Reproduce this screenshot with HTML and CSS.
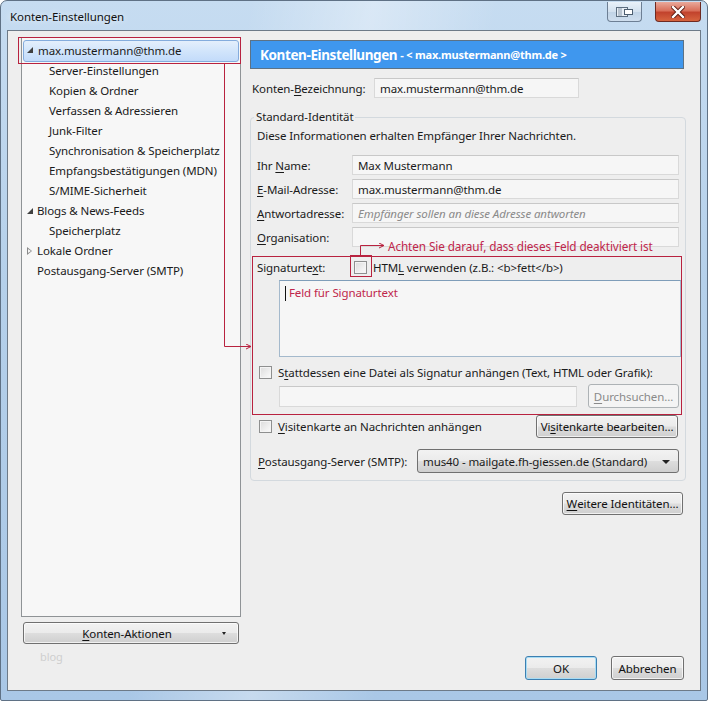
FILE: index.html
```html
<!DOCTYPE html>
<html lang="de">
<head>
<meta charset="utf-8">
<title>Konten-Einstellungen</title>
<link rel="stylesheet" href="styles.css">
</head>
<body>
<div class="window">
  <div class="titlebar">
    <span class="title">Konten-Einstellungen</span>
    <div class="caption-buttons">
      <span class="cap-btn cap-restore">
        <svg width="18" height="10" viewBox="0 0 18 10"><rect x="0.5" y="0.5" width="11" height="9" fill="#e8eef5" stroke="#5d6e80"/><rect x="8.5" y="2.5" width="8" height="5" fill="#fff" stroke="#4d5e70"/><line x1="3" y1="1" x2="3" y2="9" stroke="#8a9aab"/><line x1="5" y1="1" x2="5" y2="9" stroke="#8a9aab"/></svg>
      </span>
      <span class="cap-btn cap-close">
        <svg width="14" height="12" viewBox="0 0 14 12"><path d="M2 1 L12 11 M12 1 L2 11" stroke="#5a1a10" stroke-width="4.2" stroke-linecap="square"/><path d="M2 1 L12 11 M12 1 L2 11" stroke="#ffffff" stroke-width="2.4" stroke-linecap="square"/></svg>
      </span>
    </div>
  </div>
  <div class="client">
    <div class="left-col">
      <div class="tree">
        <div class="tree-row selected"><span class="twisty open"></span>max.mustermann@thm.de</div>
        <div class="tree-row child">Server-Einstellungen</div>
        <div class="tree-row child">Kopien &amp; Ordner</div>
        <div class="tree-row child">Verfassen &amp; Adressieren</div>
        <div class="tree-row child">Junk-Filter</div>
        <div class="tree-row child">Synchronisation &amp; Speicherplatz</div>
        <div class="tree-row child">Empfangsbestätigungen (MDN)</div>
        <div class="tree-row child">S/MIME-Sicherheit</div>
        <div class="tree-row"><span class="twisty open"></span>Blogs &amp; News-Feeds</div>
        <div class="tree-row child">Speicherplatz</div>
        <div class="tree-row"><span class="twisty closed"></span>Lokale Ordner</div>
        <div class="tree-row"><span class="twisty none"></span>Postausgang-Server (SMTP)</div>
      </div>
      <div class="btn actions-btn"><span class="btn-label"><u>K</u>onten-Aktionen</span><span class="mini-arrow"></span></div>
      <div class="faint">blog</div>
    </div>
    <div class="right-col">
      <div class="pane-header"><span class="ph-main">Konten-Einstellungen</span><span class="ph-sub"> - &lt; max.mustermann@thm.de &gt;</span></div>
      <div class="acct-row">
        <span class="acct-label">Konten-<u>B</u>ezeichnung:</span>
        <span class="field acct-field">max.mustermann@thm.de</span>
      </div>
      <fieldset class="group">
        <legend>Standard-Identität</legend>
        <div class="desc">Diese Informationen erhalten Empfänger Ihrer Nachrichten.</div>
        <div class="form-row first">
          <span class="flabel">Ihr <u>N</u>ame:</span>
          <span class="field wide">Max Mustermann</span>
        </div>
        <div class="form-row">
          <span class="flabel"><u>E</u>-Mail-Adresse:</span>
          <span class="field wide">max.mustermann@thm.de</span>
        </div>
        <div class="form-row">
          <span class="flabel"><u>A</u>ntwortadresse:</span>
          <span class="field wide placeholder">Empfänger sollen an diese Adresse antworten</span>
        </div>
        <div class="form-row">
          <span class="flabel"><u>O</u>rganisation:</span>
          <span class="field wide"></span>
        </div>
        <div class="sig-row">
          <span class="flabel">Signaturte<u>x</u>t:</span>
          <span class="check"></span>
          <span class="check-text">HTM<u>L</u> verwenden (z.B.: &lt;b&gt;fett&lt;/b&gt;)</span>
        </div>
        <div class="sig-area"><span class="caret"></span><span class="sig-note">Feld für Signaturtext</span></div>
        <div class="file-check-row">
          <span class="check"></span>
          <span class="check-text">S<u>t</u>attdessen eine Datei als Signatur anhängen (Text, HTML oder Grafik):</span>
        </div>
        <div class="file-row">
          <span class="field file-field"></span>
          <span class="btn disabled browse-btn"><u>D</u>urchsuchen...</span>
        </div>
        <div class="vcard-row">
          <span class="check"></span>
          <span class="check-text vcard-text"><u>V</u>isitenkarte an Nachrichten anhängen</span>
          <span class="btn vcard-btn">Vi<u>s</u>itenkarte bearbeiten...</span>
        </div>
        <div class="smtp-row">
          <span class="smtp-label"><u>P</u>ostausgang-Server (SMTP):</span>
          <span class="select">mus40 - mailgate.fh-giessen.de (Standard)<span class="sel-arrow"></span></span>
        </div>
      </fieldset>
      <div class="more-row">
        <span class="btn more-btn"><u>W</u>eitere Identitäten...</span>
      </div>
      <div class="dialog-buttons">
        <span class="btn default ok-btn">OK</span>
        <span class="btn cancel-btn">Abbrechen</span>
      </div>
    </div>
  </div>

  <svg class="annot" width="708" height="701" viewBox="0 0 708 701">
    <defs>
      <marker id="ah" markerWidth="6" markerHeight="6" refX="5" refY="3" orient="auto" markerUnits="userSpaceOnUse">
        <path d="M0 0.5 L5 3 L0 5.5" fill="none" stroke="#b8223f" stroke-width="1"/>
      </marker>
    </defs>
    <rect x="18.5" y="37.5" width="222" height="26" fill="none" stroke="#b8223f"/>
    <polyline points="224.5,63.5 224.5,346.5 251,346.5" fill="none" stroke="#b8223f" marker-end="url(#ah)"/>
    <rect x="252.5" y="256.5" width="429" height="158" fill="none" stroke="#b8223f"/>
    <rect x="350.5" y="255.5" width="21" height="21" fill="none" stroke="#b8223f"/>
    <polyline points="360.5,255.5 360.5,245.5 384,245.5" fill="none" stroke="#b8223f" marker-end="url(#ah)"/>
  </svg>
  <span class="annot-text">Achten Sie darauf, dass dieses Feld deaktiviert ist</span>
</div>
</body>
</html>
```

FILE: styles.css
```css
* { box-sizing: border-box; }
html, body { margin: 0; padding: 0; }
body {
  width: 708px;
  height: 701px;
  overflow: hidden;
  font-family: "Noto Sans", "Open Sans", sans-serif;
  font-size: 11.5px;
  letter-spacing: -0.1px;
  color: #1a1a1a;
  background: #ffffff;
}
u { text-decoration: underline; text-underline-offset: 2px; }

.window {
  position: relative;
  width: 708px;
  height: 701px;
  border: 1px solid #5f7185;
  border-radius: 7px 7px 2px 2px;
  background:
    linear-gradient(100deg, rgba(255,255,255,0) 30%, rgba(255,255,255,0.35) 45%, rgba(255,255,255,0) 60%),
    linear-gradient(180deg, #c6dcf1 0%, #b5d0ea 40%, #a9c7e6 100%);
  display: flex;
  flex-direction: column;
}

.titlebar {
  height: 29px;
  display: flex;
  align-items: flex-start;
  padding-left: 9px;
  flex: none;
}
.title {
  margin-top: 8px;
  font-size: 11.5px;
  color: #111;
  text-shadow: 0 0 6px rgba(255,255,255,0.9);
}
.caption-buttons {
  margin-left: auto;
  display: flex;
  gap: 13px;
  margin-right: 6px;
  margin-top: 1px;
}
.cap-btn {
  display: flex;
  align-items: center;
  justify-content: center;
  height: 20px;
  border: 1px solid #6d7f94;
  border-top: none;
  border-radius: 0 0 4px 4px;
}
.cap-restore {
  width: 35px;
  background: linear-gradient(180deg, #e9f1f9 0%, #d3e1ef 50%, #c0d3e6 51%, #cfdeee 100%);
}
.cap-close {
  width: 46px;
  border-color: #6e2a22;
  background: linear-gradient(180deg, #e9a99b 0%, #d9705b 45%, #c2432d 55%, #d6643f 100%);
}

.client {
  flex: 1;
  margin: 0 6px 9px 6px;
  border: 1px solid #6d7a88;
  background: #eeeeee;
  display: flex;
  padding: 6px 14px 10px 13px;
  gap: 9px;
}

.left-col {
  width: 220px;
  display: flex;
  flex-direction: column;
}
.tree {
  height: 580px;
  border: 1px solid #8f9396;
  background: #f7f7f7;
  padding: 2px 1px;
}
.tree-row {
  height: 20px;
  line-height: 20px;
  padding-left: 14px;
  white-space: nowrap;
  position: relative;
}
.tree-row.child { padding-left: 26px; }
.tree-row.selected {
  height: 22px;
  line-height: 20px;
  margin-bottom: -1px;
  padding-left: 14px;
  border: 1px solid #84acdd;
  border-radius: 3px;
  background: linear-gradient(180deg, #e4effc 0%, #d2e5fb 50%, #c3dbfa 100%);
}
.twisty {
  position: absolute;
  left: 4px;
  top: 7px;
  width: 0;
  height: 0;
}
.tree-row.selected .twisty { left: 3px; top: 6px; }
.twisty.open {
  border-right: 6px solid #404040;
  border-top: 6px solid transparent;
}
.twisty.closed {
  width: 4px;
  height: 8px;
  top: 6px;
  border: none;
  background: none;
}
.twisty.closed::before {
  content: "";
  position: absolute;
  left: 0;
  top: 0;
  border-left: 5px solid #8a8a8a;
  border-top: 4px solid transparent;
  border-bottom: 4px solid transparent;
}
.twisty.closed::after {
  content: "";
  position: absolute;
  left: 1px;
  top: 2px;
  border-left: 3px solid #f7f7f7;
  border-top: 2px solid transparent;
  border-bottom: 2px solid transparent;
}
.tree-row .twisty.none { display: none; }

.btn {
  display: inline-flex;
  align-items: center;
  justify-content: center;
  height: 23px;
  padding: 0 6px;
  border: 1px solid #707070;
  border-radius: 3px;
  background: linear-gradient(180deg, #f2f2f2 0%, #ebebeb 48%, #dddddd 52%, #cfcfcf 100%);
  box-shadow: inset 0 0 0 1px rgba(255,255,255,0.7);
  color: #111;
  white-space: nowrap;
}
.btn.disabled {
  border-color: #adb2b5;
  background: #f4f4f4;
  color: #8a8a8a;
  box-shadow: none;
}
.btn.default {
  border-color: #3c7fb1;
  box-shadow: inset 0 0 0 1px #a8dcf4;
}

.actions-btn {
  margin-top: 5px;
  margin-left: 2px;
  width: 216px;
  height: 22px;
  position: relative;
  padding-right: 14px;
}
.mini-arrow {
  position: absolute;
  right: 12px;
  top: 9px;
  border-top: 3px solid #222;
  border-left: 2px solid transparent;
  border-right: 2px solid transparent;
}
.faint {
  margin-top: 5px;
  margin-left: 19px;
  color: #cfcfcf;
  font-size: 11px;
}

.right-col {
  width: 436px;
  display: flex;
  flex-direction: column;
}
.pane-header {
  margin-top: 3px;
  width: 434px;
  height: 29px;
  border: 1px solid #5c7286;
  background: #3f97ee;
  color: #ffffff;
  font-weight: bold;
  display: flex;
  align-items: center;
  padding-left: 9px;
  white-space: nowrap;
}
.ph-main { font-size: 13.5px; letter-spacing: -0.4px; }
.ph-sub { font-size: 11px; margin-left: 3px; letter-spacing: -0.2px; }

.acct-row {
  margin-top: 9px;
  height: 20px;
  display: flex;
  align-items: center;
  padding-left: 2px;
}
.acct-label { width: 122px; }
.field {
  display: flex;
  align-items: center;
  height: 20px;
  border: 1px solid #d9d9d9;
  border-top-color: #c8c8c8;
  background: #f6f6f6;
  padding-left: 5px;
  white-space: nowrap;
  overflow: hidden;
}
.acct-field { width: 205px; }

.group {
  margin: 11px 0 0 0;
  padding: 0 6px 7px 6px;
  border: 1px solid #d3d9de;
  border-radius: 4px;
  min-width: 0;
}
.group legend {
  padding: 0 2px;
  margin-left: -3px;
  line-height: 16px;
}
.desc {
  height: 16px;
  line-height: 16px;
  margin-top: 3px;
}
.form-row {
  display: flex;
  align-items: center;
  height: 20px;
  margin-top: 4px;
}
.form-row.first { margin-top: 11px; }
.flabel { width: 95px; flex: none; white-space: nowrap; }
.field.wide { width: 328px; }
.placeholder { color: #8a8a8a; font-style: italic; }

.sig-row {
  display: flex;
  align-items: center;
  height: 16px;
  margin-top: 12px;
}
.check {
  display: inline-block;
  flex: none;
  width: 13px;
  height: 13px;
  border: 1px solid #8e8f8f;
  background: linear-gradient(135deg, #dcdcdc 0%, #f2f2f2 70%, #fbfbfb 100%);
  box-shadow: inset 0 0 0 1px #f4f4f4;
}
.sig-row .check { margin-left: 2px; }
.check-text { margin-left: 6px; white-space: nowrap; }

.sig-area {
  margin: 5px 0 0 22px;
  width: 402px;
  height: 77px;
  border: 1px solid #a4b9cc;
  border-top-color: #7f9db9;
  background: #f6f6f6;
  padding: 4px 0 0 5px;
  display: flex;
  align-items: flex-start;
}
.caret {
  width: 1px;
  height: 15px;
  background: #111;
  margin-top: 1px;
}
.sig-note {
  color: #c0264b;
  margin-left: 3px;
  line-height: 16px;
}

.file-check-row {
  display: flex;
  align-items: center;
  height: 16px;
  margin-top: 7px;
  padding-left: 2px;
}
.file-row {
  display: flex;
  align-items: center;
  height: 24px;
  margin-top: 4px;
  padding-left: 22px;
}
.file-field { width: 298px; height: 21px; }
.browse-btn { margin-left: 11px; width: 91px; height: 24px; }

.vcard-row {
  display: flex;
  align-items: center;
  height: 23px;
  margin-top: 7px;
  padding-left: 2px;
}
.vcard-text { flex: 1; }
.vcard-btn { width: 142px; height: 23px; margin-right: 1px; }

.smtp-row {
  display: flex;
  align-items: center;
  height: 24px;
  margin-top: 11px;
  padding-left: 1px;
}
.smtp-label { width: 159px; flex: none; }
.select {
  position: relative;
  display: flex;
  align-items: center;
  width: 263px;
  height: 24px;
  border: 1px solid #707070;
  border-radius: 3px;
  background: linear-gradient(180deg, #f2f2f2 0%, #ebebeb 48%, #dddddd 52%, #cfcfcf 100%);
  padding-left: 5px;
  white-space: nowrap;
}
.sel-arrow {
  position: absolute;
  right: 8px;
  top: 10px;
  border-top: 4px solid #222;
  border-left: 4px solid transparent;
  border-right: 4px solid transparent;
}

.more-row {
  display: flex;
  justify-content: flex-end;
  margin-top: 11px;
  padding-right: 3px;
}
.more-btn { width: 121px; height: 23px; }

.dialog-buttons {
  margin-top: auto;
  display: flex;
  justify-content: flex-end;
  gap: 14px;
  padding-right: 2px;
}
.ok-btn { width: 72px; height: 24px; }
.cancel-btn { width: 73px; height: 24px; }

.annot {
  position: absolute;
  left: -1px;
  top: -1px;
  pointer-events: none;
}
.annot-text {
  position: absolute;
  left: 387px;
  top: 237px;
  color: #c0264b;
  font-size: 11.75px;
  white-space: nowrap;
  line-height: 16px;
}
```
